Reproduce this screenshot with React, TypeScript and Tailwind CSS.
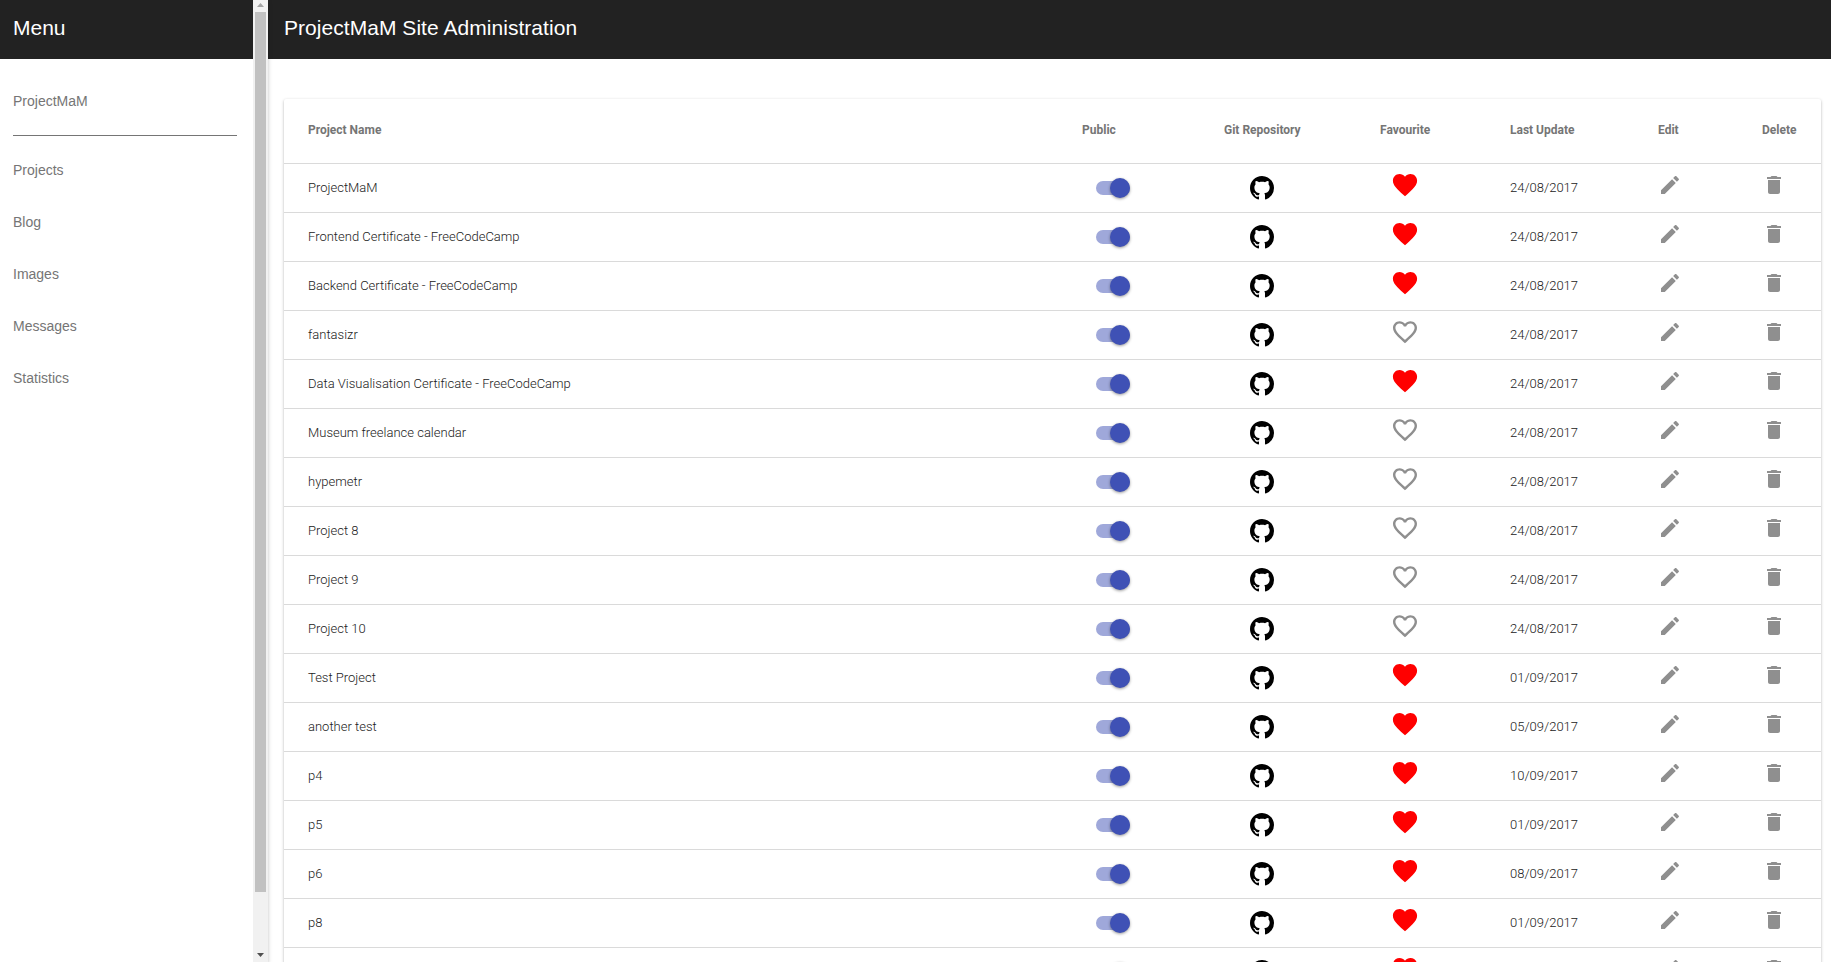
import React from "react";

type Project = { name: string; favourite: boolean; updated: string };

const projects: Project[] = [
  { name: "ProjectMaM", favourite: true, updated: "24/08/2017" },
  { name: "Frontend Certificate - FreeCodeCamp", favourite: true, updated: "24/08/2017" },
  { name: "Backend Certificate - FreeCodeCamp", favourite: true, updated: "24/08/2017" },
  { name: "fantasizr", favourite: false, updated: "24/08/2017" },
  { name: "Data Visualisation Certificate - FreeCodeCamp", favourite: true, updated: "24/08/2017" },
  { name: "Museum freelance calendar", favourite: false, updated: "24/08/2017" },
  { name: "hypemetr", favourite: false, updated: "24/08/2017" },
  { name: "Project 8", favourite: false, updated: "24/08/2017" },
  { name: "Project 9", favourite: false, updated: "24/08/2017" },
  { name: "Project 10", favourite: false, updated: "24/08/2017" },
  { name: "Test Project", favourite: true, updated: "01/09/2017" },
  { name: "another test", favourite: true, updated: "05/09/2017" },
  { name: "p4", favourite: true, updated: "10/09/2017" },
  { name: "p5", favourite: true, updated: "01/09/2017" },
  { name: "p6", favourite: true, updated: "08/09/2017" },
  { name: "p8", favourite: true, updated: "01/09/2017" },
  { name: "", favourite: true, updated: "" },
];

const menu = ["Projects", "Blog", "Images", "Messages", "Statistics"];

const columns = "grid grid-cols-[774px_142px_156px_130px_148px_104px_83px]";

function Toggle() {
  return (
    <span className="mt-[3px] ml-[14px] flex h-5 w-[34px] items-center justify-end">
      <span className="flex h-3.5 w-[34px] items-center justify-end rounded-full bg-[#9fa8da]">
        <span className="size-5 shrink-0 rounded-full bg-[#3f51b5] shadow-[0_1px_3px_rgba(0,0,0,0.4)]" />
      </span>
    </span>
  );
}

function GithubIcon() {
  return (
    <svg viewBox="0 0 16 16" className="size-6 fill-black">
      <path d="M8 0C3.58 0 0 3.58 0 8c0 3.54 2.29 6.53 5.47 7.59.4.07.55-.17.55-.38 0-.19-.01-.82-.01-1.49-2.01.37-2.53-.49-2.69-.94-.09-.23-.48-.94-.82-1.13-.28-.15-.68-.52-.01-.53.63-.01 1.08.58 1.23.82.72 1.21 1.87.87 2.33.66.07-.52.28-.87.51-1.07-1.78-.2-3.64-.89-3.64-3.95 0-.87.31-1.59.82-2.15-.08-.2-.36-1.02.08-2.12 0 0 .67-.21 2.2.82.64-.18 1.32-.27 2-.27s1.36.09 2 .27c1.53-1.04 2.2-.82 2.2-.82.44 1.1.16 1.92.08 2.12.51.56.82 1.27.82 2.15 0 3.07-1.87 3.75-3.65 3.95.29.25.54.73.54 1.48 0 1.07-.01 1.93-.01 2.2 0 .21.15.46.55.38A8.01 8.01 0 0 0 16 8c0-4.42-3.58-8-8-8z" />
    </svg>
  );
}

function HeartIcon({ filled }: { filled: boolean }) {
  return filled ? (
    <svg viewBox="0 0 24 24" className="size-6 scale-[1.21] fill-[#ff0000]">
      <path d="M12 21.35l-1.45-1.32C5.4 15.36 2 12.28 2 8.5 2 5.42 4.42 3 7.5 3c1.74 0 3.41.81 4.5 2.09C13.09 3.81 14.76 3 16.5 3 19.58 3 22 5.42 22 8.5c0 3.78-3.4 6.86-8.55 11.54L12 21.35z" />
    </svg>
  ) : (
    <svg viewBox="0 0 24 24" className="size-6 scale-[1.2] fill-[#8f8f8f]">
      <path d="M16.5 3c-1.74 0-3.41.81-4.5 2.09C10.91 3.81 9.24 3 7.5 3 4.42 3 2 5.42 2 8.5c0 3.78 3.4 6.86 8.55 11.54L12 21.35l1.45-1.32C18.6 15.36 22 12.28 22 8.5 22 5.42 19.58 3 16.5 3zm-4.4 15.55l-.1.1-.1-.1C7.14 14.24 4 11.39 4 8.5 4 6.5 5.5 5 7.5 5c1.54 0 3.04.99 3.57 2.36h1.87C13.46 5.99 14.96 5 16.5 5c2 0 3.5 1.5 3.5 3.5 0 2.89-3.14 5.74-7.9 10.05z" />
    </svg>
  );
}

function EditIcon() {
  return (
    <svg viewBox="0 0 24 24" className="size-6 fill-[#8f8f8f]">
      <path d="M3 17.25V21h3.75L17.81 9.94l-3.75-3.75L3 17.25zM20.71 7.04c.39-.39.39-1.02 0-1.41l-2.34-2.34c-.39-.39-1.02-.39-1.41 0l-1.83 1.83 3.75 3.75 1.83-1.83z" />
    </svg>
  );
}

function DeleteIcon() {
  return (
    <svg viewBox="0 0 24 24" className="size-6 fill-[#8f8f8f]">
      <path d="M6 19c0 1.1.9 2 2 2h8c1.1 0 2-.9 2-2V7H6v12zM19 4h-3.5l-1-1h-5l-1 1H5v2h14V4z" />
    </svg>
  );
}

function Row({ project }: { project: Project }) {
  return (
    <div className={`${columns} h-[49px] shrink-0 border-b border-[#dadada] pl-6 text-[13px] leading-[48px] font-light text-[#212121]`}>
      <span>{project.name}</span>
      <span className="pt-[11px] leading-none"><Toggle /></span>
      <span className="pt-3 pl-[26px]"><GithubIcon /></span>
      <span className="pt-[9px] pl-[13px]"><HeartIcon filled={project.favourite} /></span>
      <span>{project.updated}</span>
      <span className="pt-[9px]"><EditIcon /></span>
      <span className="pt-[9px]"><DeleteIcon /></span>
    </div>
  );
}

export default function App() {
  return (
    <div className="flex h-[962px] w-full overflow-hidden bg-white font-['Liberation_Sans',sans-serif]">
      <aside className="z-10 flex w-[268px] shrink-0 shadow-[0_2px_4px_rgba(0,0,0,0.25)]">
        <div className="w-[253px] bg-white">
          <div className="h-[59px] bg-[#222222] pl-[13px] text-[21px] leading-[56px] text-white">Menu</div>
          <nav className="px-[13px] pt-[16px] text-sm text-[#757575]">
            <div className="h-[61px] w-[224px] border-b border-[#757575] leading-[52px]">ProjectMaM</div>
            <div className="pt-2">
              {menu.map((item) => (
                <div key={item} className="h-[52px] leading-[52px]">{item}</div>
              ))}
            </div>
          </nav>
        </div>
        <div className="flex w-[15px] flex-col items-center bg-[#f1f1f1]">
          <svg viewBox="0 0 15 12" className="h-3 w-[15px] shrink-0 fill-[#a3a3a3]"><path d="M4 7h7L7.5 3z" /></svg>
          <div className="h-[880px] w-[11px] bg-[#c1c1c1]" />
          <svg viewBox="0 0 15 12" className="mt-auto mb-0.5 h-3 w-[15px] shrink-0 fill-[#505050]"><path d="M4 5h7L7.5 9z" /></svg>
        </div>
      </aside>
      <main className="flex min-w-0 flex-1 flex-col">
        <header className="h-[59px] shrink-0 bg-[#222222] pl-4 text-[21px] leading-[56px] tracking-[0.045px] text-white">
          ProjectMaM Site Administration
        </header>
        <section className="mt-10 mr-[10px] ml-4 flex h-[870px] shrink-0 flex-col rounded-[2px] font-[Roboto,sans-serif] shadow-[0_1px_3px_rgba(0,0,0,0.3)]">
          <div className={`${columns} h-[65px] shrink-0 border-b border-[#dadada] pl-6 text-xs leading-[63px] font-bold text-[#757575]`}>
            <span>Project Name</span>
            <span>Public</span>
            <span>Git Repository</span>
            <span>Favourite</span>
            <span>Last Update</span>
            <span>Edit</span>
            <span>Delete</span>
          </div>
          {projects.map((project, index) => (
            <Row key={index} project={project} />
          ))}
        </section>
      </main>
    </div>
  );
}
